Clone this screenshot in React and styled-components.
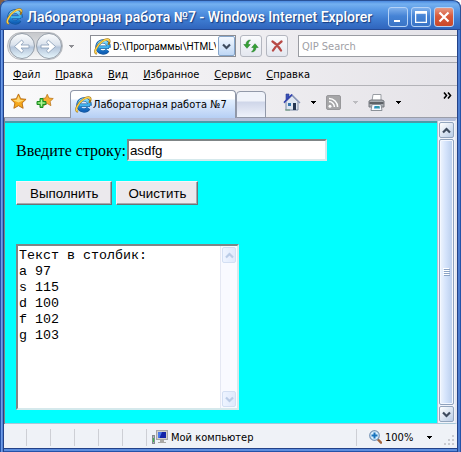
import React, { useState } from "react";
import styled, { createGlobalStyle, css } from "styled-components";

const UI_FONT = '"DejaVu Sans Condensed", "Noto Sans", sans-serif';
const NARROW_FONT = 'Roboto, "Noto Sans", sans-serif';

const GlobalStyle = createGlobalStyle`
  * { box-sizing: border-box; }
  body { margin: 0; background: linear-gradient(to right, #865f42 50%, #fff 50%); }
  button, input, textarea { margin: 0; border-radius: 0; outline: none; }
`;

const Window = styled.div`
  min-height: 100vh;
  display: flex;
  flex-direction: column;
  padding: 0 4px 4px;
  border-radius: 8px 8px 0 0;
  background: linear-gradient(to right, #2452a8 0 1px, #6f9ce6 1px 2px, #5585d6 2px 3px, #234288 3px 4px, transparent 4px calc(100% - 4px), #234288 calc(100% - 4px) calc(100% - 3px), #4c7dd0 calc(100% - 3px) calc(100% - 1px), #2452a8 calc(100% - 1px)),
    linear-gradient(to top, #2452a8 0 1px, #5c8ddd 1px 3px, #234288 3px 4px, #e9e7ec 4px);
  font: 11px ${UI_FONT};
  color: #000;
`;

const TitleBar = styled.header`
  height: 30px;
  margin: 0 -4px;
  padding: 3px 6px 0 5px;
  display: flex;
  align-items: center;
  gap: 4px;
  border: 1px solid #2a5298;
  border-bottom-color: #264a94;
  border-radius: 8px 8px 0 0;
  background: linear-gradient(#4b8ae0 0, #74b0f0 3px, #5a9ae6 9px, #3f7dd2 18px, #3065bd 28px);
`;

const Title = styled.h1`
  flex: 1;
  min-width: 0;
  margin: 0;
  overflow: hidden;
  white-space: nowrap;
  font: 500 14px/20px Roboto, "Open Sans", sans-serif;
  color: #fff;
  text-shadow: 1px 1px 1px #173d80;
`;

const Caption = styled.div`
  display: flex;
  gap: 3px;
`;

const CaptionButton = styled.button`
  width: 20px;
  height: 20px;
  padding: 0;
  display: grid;
  place-items: center;
  border: 1px solid #b5d2f6;
  border-radius: 3px;
  background: ${(p) => (p.$close ? "linear-gradient(#e79a85, #d85a3b 45%, #c9482a)" : "linear-gradient(#7fb0ec, #4583d5 45%, #3a74c6)")};
`;

const Bar = styled.div`
  display: flex;
  align-items: center;
  background: linear-gradient(to right, #fafafb, #e5e3e8);
`;

const NavBar = styled(Bar)`
  height: 33px;
  padding-left: 3px;
  border-bottom: 1px solid #a9a9ae;
`;

const Travel = styled.div`
  width: 56px;
  height: 28px;
  display: flex;
  align-items: center;
  justify-content: space-around;
  border: 1px solid #b9bbc0;
  border-radius: 14px;
  background: linear-gradient(#c6c8cc, #f5f6f7);
`;

const RoundButton = styled.button`
  width: 26px;
  height: 26px;
  padding: 0;
  display: grid;
  place-items: center;
  border: 1px solid #949da8;
  border-radius: 50%;
  background: linear-gradient(#fbfcfd, #dbe3ed 45%, #b4c5da 55%, #e6f5fc);
`;

const Arrow = styled.button`
  width: ${(p) => p.$width || 16}px;
  height: 16px;
  padding: 0;
  display: grid;
  place-items: center;
  border: 0;
  background: transparent;
  color: ${(p) => p.$color || "#000"};
`;

const Address = styled.div`
  flex: 0 1 146px;
  min-width: 0;
  height: 22px;
  margin-left: 11px;
  padding-left: 3px;
  display: flex;
  align-items: center;
  gap: 2px;
  border: 1px solid #8b8d94;
  background: #fff;
`;

const AddressInput = styled.input`
  flex: 1;
  min-width: 0;
  padding: 0;
  border: 0;
  background: transparent;
  font: 10px ${NARROW_FONT};
`;

const GoButton = styled.button`
  width: 17px;
  height: 20px;
  padding: 0;
  display: grid;
  place-items: center;
  border: 1px solid #86a6cb;
  border-radius: 2px;
  background: linear-gradient(#f3f8ff, #bfd7f5);
  color: #3e4b5e;
`;

const ToolButton = styled.button`
  width: 22px;
  height: 22px;
  margin-left: 4px;
  padding: 0;
  display: grid;
  place-items: center;
  border: 1px solid #b3b6bf;
  border-radius: 3px;
  background: linear-gradient(#fafbfd, #e4e7ef);
`;

const Search = styled.input`
  flex: 1;
  min-width: 0;
  height: 22px;
  margin-left: 10px;
  padding: 0 3px;
  border: 1px solid #9a9ca2;
  border-right: 0;
  background: #fff;
  font: 11px ${UI_FONT};
  &::placeholder { color: #a0a0a5; opacity: 1; }
`;

const MenuBar = styled(Bar)`
  height: 23px;
  padding: 2px 0 0 9px;
  gap: 15px;
  border-bottom: 1px solid #b3b3b8;
`;

const MenuItem = styled.button`
  padding: 0;
  border: 0;
  background: transparent;
  color: #000;
  font: 11px/16px ${UI_FONT};
  white-space: nowrap;
`;

const TabBar = styled(Bar)`
  height: 32px;
  padding: 0 5px 0 5px;
  box-shadow: inset 0 -1px #9b9ea9;
`;

const IconButton = styled.button`
  width: ${(p) => p.$width || 18}px;
  height: 20px;
  flex: none;
  padding: 0;
  display: grid;
  place-items: center;
  border: 0;
  background: transparent;
`;

const Favorites = styled.div`
  display: flex;
  gap: 9px;
  margin: 0 16px 2px 0;
`;

const Tab = styled.button`
  align-self: flex-end;
  height: 28px;
  padding: 0 8px 0 4px;
  display: flex;
  align-items: center;
  gap: 1px;
  border: 1px solid #8f97a8;
  border-bottom: 0;
  border-radius: 4px 4px 0 0;
  background: linear-gradient(#fff 0 8px, #e2efff 9px, #b6cff4);
  color: #000;
  font: 11px ${UI_FONT};
  white-space: nowrap;
`;

const NewTab = styled.button`
  align-self: flex-end;
  width: 30px;
  height: 27px;
  padding: 0;
  border: 1px solid #9299a9;
  border-radius: 4px 4px 0 0;
  background: linear-gradient(#f0f3fa 0 9px, #cfd6e9 10px, #eef2fb);
`;

const Commands = styled.div`
  display: flex;
  align-items: center;
  margin-left: 17px;
`;

const Chevron = styled.button`
  align-self: flex-start;
  margin: 1px 0 0 auto;
  padding: 0;
  border: 0;
  background: transparent;
`;

const Viewport = styled.main`
  flex: 1;
  display: flex;
  margin-left: 1px;
  border-top: 3px solid #b5bfd9;
  border-right: 2px solid #e4e6ef;
  border-bottom: 1px solid #a8c8d8;
  box-shadow: -1px 0 #7f8088;
`;

const Page = styled.form`
  flex: 1;
  min-width: 0;
  padding: 15px 11px 13px;
  border-top: 2px solid #4b9ca8;
  background: #0ff;
`;

const Field = styled.div`
  display: flex;
  align-items: center;
  gap: 1px;
  font: 16px/22px "Liberation Serif", serif;
`;

const FieldLabel = styled.label`
  padding-top: 2px;
`;

const inset = css`
  border: 2px solid;
  border-color: #7f8586 #d5e9ec #d5e9ec #7f8586;
  background: #fff;
`;

const TextInput = styled.input`
  width: 200px;
  min-width: 0;
  height: 22px;
  padding: 0 1px;
  ${inset}
  font: 10pt "Liberation Sans", Arial, sans-serif;
`;

const Actions = styled.div`
  display: flex;
  gap: 4px;
  margin: 19px 0 39px;
`;

const PushButton = styled.button`
  height: 24px;
  padding: 0 ${(p) => p.$pad}px;
  border: 1px solid;
  border-color: #f6f5f7 #6c7478 #6c7478 #f6f5f7;
  box-shadow: inset -1px -1px #a9a8ac;
  background: #ebe9ed;
  color: #000;
  font: 10pt "Liberation Sans", Arial, sans-serif;
`;

const OutputBox = styled.div`
  width: 223px;
  max-width: 100%;
  display: flex;
  ${inset}
`;

const Output = styled.textarea`
  flex: 1;
  min-width: 0;
  height: 162px;
  padding: 2px 1px 1px;
  border: 0;
  resize: none;
  overflow: hidden;
  background: transparent;
  color: #000;
  font: 10pt/16px "Liberation Mono", "Courier New", monospace;
`;

const ScrollTrack = styled.div`
  width: ${(p) => (p.$pale ? 17 : 18)}px;
  flex: none;
  display: flex;
  flex-direction: column;
  gap: 1px;
  padding: 1px;
  border-left: 1px solid ${(p) => (p.$pale ? "#e5e8f3" : "#b8c0d4")};
  background: ${(p) => (p.$pale ? "#f9faff" : "#f1f3fa")};
`;

const ScrollButton = styled.button`
  height: 16px;
  flex: none;
  padding: 0;
  display: grid;
  place-items: center;
  border: 1px solid ${(p) => (p.$pale ? "#d3dff3" : "#93a5bd")};
  border-radius: 2px;
  background: ${(p) => (p.$pale ? "linear-gradient(to right, #eef4ff, #dfe9fc)" : "linear-gradient(135deg, #fff, #b9cce6)")};
  color: ${(p) => (p.$pale ? "#b9cbe6" : "#3e4b5e")};
`;

const Thumb = styled.div`
  flex: 1;
  display: grid;
  place-items: center;
  border: 1px solid #8fa2bd;
  border-radius: 2px;
  box-shadow: inset 0 0 0 1px #f4f8ff;
  background: linear-gradient(to right, #eff5fd, #d4e3fb 45%, #b8cdec);
`;

const Spacer = styled.div`
  flex: 1;
`;

const StatusBar = styled.footer`
  height: 24px;
  display: flex;
  align-items: center;
  padding: 2px 0 0 22px;
  background: #eff2f7;
`;

const StatusCell = styled.div`
  width: 24px;
  height: 17px;
  flex: none;
  border-left: 1px solid #cdcfd5;
`;

const StatusZone = styled.div`
  flex: 1;
  height: 17px;
  min-width: 0;
  display: flex;
  align-items: center;
  gap: 3px;
  padding-left: 5px;
  border-left: 1px solid #cdcfd5;
  white-space: nowrap;
`;

const Zoom = styled.div`
  width: 87px;
  height: 17px;
  display: flex;
  align-items: center;
  gap: 3px;
  padding-left: 12px;
  border-left: 1px solid #cdcfd5;
`;

const Grip = styled.svg`
  align-self: flex-end;
  flex: none;
  margin: 0 2px 2px 0;
`;

function ExplorerIcon({ id }) {
  return (
    <svg width="17" height="17" viewBox="0 0 17 17" aria-hidden="true">
      <defs>
        <linearGradient id={id} x1="0" y1="0" x2="0" y2="1">
          <stop offset="0" stopColor="#8de0fb" />
          <stop offset=".5" stopColor="#2a9ce2" />
          <stop offset="1" stopColor="#1261b8" />
        </linearGradient>
      </defs>
      <path d="M14.6 9.5A5.6 5.6 0 1 0 13.6 12.2" fill="none" stroke="#14569d" strokeWidth="4.2" />
      <path d="M5 9.2H15" stroke="#14569d" strokeWidth="3.4" />
      <path d="M14.4 9.5A5.4 5.4 0 1 0 13.4 12.1" fill="none" stroke={`url(#${id})`} strokeWidth="3.2" />
      <path d="M5 9.2H14.5" stroke="#45b5ee" strokeWidth="2.2" />
      <path d="M2.2 15.5C-.8 14 3.1 6.9 8.4 3.2c3.7-2.6 7-2.6 7.1-.2.1 1-.3 2.1-.9 3" fill="none" stroke="#9d741b" strokeWidth="2" strokeLinecap="round" />
      <path d="M2.2 15.3C-.4 13.8 3.5 6.9 8.6 3.3c3.6-2.5 6.6-2.3 6.7-.2" fill="none" stroke="#ffd34a" strokeWidth="1.3" strokeLinecap="round" />
    </svg>
  );
}

const Triangle = () => (
  <svg width="6" height="3" viewBox="0 0 6 3" shapeRendering="crispEdges" aria-hidden="true">
    <path d="M0 0h6L3 3z" fill="currentColor" />
  </svg>
);

const Caret = ({ up }) => (
  <svg width="9" height="7" viewBox="0 0 9 7" aria-hidden="true">
    <path d={up ? "M1 5.5l3.5-3.5L8 5.5" : "M1 1.5l3.5 3.5L8 1.5"} fill="none" stroke="currentColor" strokeWidth="2.2" />
  </svg>
);

const DoubleChevron = () => (
  <svg width="9" height="7" viewBox="0 0 9 7" aria-hidden="true">
    <path d="M1 .5l2.500 3L1 6.500M5 .5l2.500 3L5 6.500" fill="none" stroke="#000" strokeWidth="1.600" />
  </svg>
);

const TravelArrow = ({ forward }) => (
  <svg width="19" height="17" viewBox="0 0 19 17" aria-hidden="true">
    <path
      d={forward ? "M2 7h8L7.5 4.2 9.3 2 16.5 8.5 9.3 15 7.5 12.8 10 10H2z" : "M17 7H9l2.5-2.8L9.7 2 2.5 8.5 9.7 15l1.8-2.2L9 10h8z"}
      fill="#fff"
      stroke="#8fa3bb"
      strokeWidth=".9"
      strokeLinejoin="round"
    />
  </svg>
);

const STAR = "M9 1l2.3 5.1 5.7.6-4.2 3.9 1.1 5.6L9 13.4l-4.9 2.8 1.1-5.6L1 6.7l5.7-.6z";

const StarIcon = () => (
  <svg width="17" height="17" viewBox="0 0 18 18" aria-hidden="true">
    <path d={STAR} fill="#f6a81c" stroke="#b86d13" strokeLinejoin="round" />
    <path d="M9 3l1.6 4.1 4.2.5L9 10 3.3 7.6l4-.5z" fill="#ffd978" />
  </svg>
);

const AddStarIcon = () => (
  <svg width="18" height="17" viewBox="0 0 18 17" aria-hidden="true">
    <path d={STAR} transform="translate(4.5 .5) scale(.75)" fill="#f8b035" stroke="#b87319" strokeLinejoin="round" />
    <path d="M4 5.5h3v3h3v3H7v3H4v-3H1v-3h3z" fill="#5fd052" stroke="#1c8a20" />
    <path d="M5.500 7v6M2.500 10h6" stroke="#b9f39d" strokeWidth="1" />
  </svg>
);

const RefreshIcon = () => (
  <svg width="16" height="16" viewBox="0 0 16 16" aria-hidden="true">
    <path d="M7.5 2C4.700 2 3 3.600 3 6.500H.8L4 10.300l3.300-3.800H5.200C5.300 4.500 6 3.500 7.500 2z" fill="#35a233" stroke="#1a7425" strokeWidth=".5" />
    <path d="M8.500 14c2.800 0 4.500-1.600 4.500-4.500h2.200L12 5.700 8.700 9.500h2.100c-.1 2-.8 3-2.300 4.500z" fill="#35a233" stroke="#1a7425" strokeWidth=".5" />
  </svg>
);

const StopIcon = () => (
  <svg width="12" height="12" viewBox="0 0 12 12" aria-hidden="true">
    <path d="M1.500 1.500C4 3 8 7 10 10.500M10.500 1.500C7 4 4 7 2 10.500" stroke="#b84a47" strokeWidth="2.300" fill="none" strokeLinecap="round" />
  </svg>
);

const HomeIcon = () => (
  <svg width="18" height="18" viewBox="0 0 18 18" aria-hidden="true">
    <path d="M3 8.500l6-6 6 6V17H3z" fill="#dfe6f2" stroke="#7a8aa5" />
    <path d="M3 1h3v4L3 8z" fill="#3c53b8" stroke="#26398f" strokeWidth=".6" />
    <path d="M1 10L9 2l8 8" fill="none" stroke="#8895b8" strokeWidth="1.400" />
    <path d="M1 9.500l8-8" stroke="#2c3bb0" strokeWidth="1.500" />
    <path d="M5 10h3v3H5z" fill="#3675ad" />
    <path d="M10 10h3v7h-3z" fill="#253653" />
    <path d="M2 17h5" stroke="#6c9a79" strokeWidth="1" />
  </svg>
);

const FeedIcon = () => (
  <svg width="15" height="15" viewBox="0 0 15 15" aria-hidden="true">
    <rect x=".5" y=".5" width="14" height="14" rx="1.500" fill="#a6a6a8" stroke="#98989b" />
    <circle cx="4" cy="11.300" r="1.500" fill="#fff" />
    <path d="M3 6.600a5.400 5.400 0 0 1 5.400 5.400M3 3.400A8.600 8.600 0 0 1 11.600 12" fill="none" stroke="#fff" strokeWidth="1.500" />
  </svg>
);

const PrinterIcon = () => (
  <svg width="17" height="17" viewBox="0 0 17 17" aria-hidden="true">
    <path d="M5 .5h8V7H4z" fill="#fff" stroke="#999da3" />
    <path d="M1 7l2-1h11l2 1v6H1z" fill="#a9adb2" stroke="#74797e" />
    <path d="M1.500 8h14v2h-14z" fill="#5d6166" />
    <path d="M4 10.500h9l1 6H3z" fill="#f5fafd" stroke="#8b9198" />
    <path d="M6.500 12h5l.5 2.500H6z" fill="#2791c2" />
    <path d="M9 12.500h2v1H9z" fill="#48aa70" />
  </svg>
);

const ComputerIcon = () => (
  <svg width="16" height="15" viewBox="0 0 16 15" aria-hidden="true">
    <rect x=".5" y="5.500" width="2" height="8" fill="#aeb4b8" stroke="#858b90" />
    <path d="M1.500 8v4" stroke="#3fc04c" />
    <rect x="4.500" y=".5" width="11" height="9" fill="#d2d0cb" stroke="#a5a5a7" />
    <path d="M6 2h8v6H6z" fill="#1223a8" />
    <path d="M6 2h4L7.500 8H6z" fill="#4a78e8" />
    <path d="M8 10h4v2h2v1H6v-1h2z" fill="#aaa9a6" />
  </svg>
);

const MagnifierIcon = () => (
  <svg width="13" height="14" viewBox="0 0 13 14" aria-hidden="true">
    <path d="M8 8.500l4 4.200" stroke="#a0643d" strokeWidth="2.400" strokeLinecap="round" />
    <circle cx="5.500" cy="5.500" r="4.800" fill="#d8efff" stroke="#7895b6" strokeWidth="1.200" />
    <path d="M5.500 2.500v6M2.500 5.500h6" stroke="#1873bd" strokeWidth="2" />
  </svg>
);

const GripIcon = () => (
  <Grip width="12" height="12" viewBox="0 0 12 12" fill="#c9cbd1" aria-hidden="true">
    {[[9, 1], [5, 5], [9, 5], [1, 9], [5, 9], [9, 9]].map(([x, y]) => (
      <rect key={`${x}-${y}`} x={x} y={y} width="2" height="2" />
    ))}
  </Grip>
);

const MENUS = ["Файл", "Правка", "Вид", "Избранное", "Сервис", "Справка"];

const describe = (text) =>
  ["Текст в столбик:", ...[...text].map((ch) => `${ch} ${ch.charCodeAt(0)}`)].join("\n");

export default function App() {
  const [text, setText] = useState("asdfg");
  const [result, setResult] = useState(describe("asdfg"));

  const run = (event) => {
    event.preventDefault();
    setResult(describe(text));
  };
  const clear = () => {
    setText("");
    setResult("");
  };

  return (
    <>
      <GlobalStyle />
      <Window>
        <TitleBar>
          <ExplorerIcon id="title-e" />
          <Title>Лабораторная работа №7 - Windows Internet Explorer</Title>
          <Caption>
            <CaptionButton aria-label="Свернуть">
              <svg width="12" height="12"><path d="M2 9h6v2H2z" fill="#fff" /></svg>
            </CaptionButton>
            <CaptionButton aria-label="Развернуть">
              <svg width="12" height="12"><path d="M.5 2h11M.5 .5h11v11H.5z" fill="none" stroke="#fff" strokeWidth="1.500" /></svg>
            </CaptionButton>
            <CaptionButton $close aria-label="Закрыть">
              <svg width="12" height="12"><path d="M1.500 1.500l9 9M10.500 1.500l-9 9" stroke="#fff" strokeWidth="2.200" /></svg>
            </CaptionButton>
          </Caption>
        </TitleBar>

        <NavBar>
          <Travel>
            <RoundButton aria-label="Назад"><TravelArrow /></RoundButton>
            <RoundButton aria-label="Вперёд"><TravelArrow forward /></RoundButton>
          </Travel>
          <Arrow aria-label="Журнал" $color="#8e8e93"><Triangle /></Arrow>
          <Address>
            <ExplorerIcon id="address-e" />
            <AddressInput aria-label="Адрес" defaultValue="D:\Программы\HTML\" />
            <GoButton aria-label="Показать адреса"><Caret /></GoButton>
          </Address>
          <ToolButton aria-label="Обновить"><RefreshIcon /></ToolButton>
          <ToolButton aria-label="Остановить"><StopIcon /></ToolButton>
          <Search aria-label="Поиск" placeholder="QIP Search" />
        </NavBar>

        <MenuBar as="nav">
          {MENUS.map((name) => (
            <MenuItem key={name}><u>{name[0]}</u>{name.slice(1)}</MenuItem>
          ))}
        </MenuBar>

        <TabBar>
          <Favorites>
            <IconButton aria-label="Избранное"><StarIcon /></IconButton>
            <IconButton aria-label="Добавить в избранное"><AddStarIcon /></IconButton>
          </Favorites>
          <Tab><ExplorerIcon id="tab-e" />Лабораторная работа №7</Tab>
          <NewTab aria-label="Новая вкладка" />
          <Commands>
            <IconButton aria-label="Домой"><HomeIcon /></IconButton>
            <Arrow $width={24} aria-label="Домашние страницы"><Triangle /></Arrow>
            <IconButton aria-label="Каналы"><FeedIcon /></IconButton>
            <Arrow $width={24} $color="#bcbcc0" aria-label="Список каналов"><Triangle /></Arrow>
            <IconButton $width={20} aria-label="Печать"><PrinterIcon /></IconButton>
            <Arrow $width={22} aria-label="Параметры печати"><Triangle /></Arrow>
          </Commands>
          <Chevron aria-label="Ещё"><DoubleChevron /></Chevron>
        </TabBar>

        <Viewport>
          <Page onSubmit={run}>
            <Field>
              <FieldLabel htmlFor="source">Введите строку:</FieldLabel>
              <TextInput id="source" value={text} onChange={(e) => setText(e.target.value)} />
            </Field>
            <Actions>
              <PushButton type="submit" $pad={13}>Выполнить</PushButton>
              <PushButton type="button" $pad={11} onClick={clear}>Очистить</PushButton>
            </Actions>
            <OutputBox>
              <Output aria-label="Результат" readOnly value={result} />
              <ScrollTrack $pale>
                <ScrollButton type="button" $pale aria-label="Вверх"><Caret up /></ScrollButton>
                <Spacer />
                <ScrollButton type="button" $pale aria-label="Вниз"><Caret /></ScrollButton>
              </ScrollTrack>
            </OutputBox>
          </Page>
          <ScrollTrack>
            <ScrollButton aria-label="Прокрутить вверх"><Caret up /></ScrollButton>
            <Thumb>
              <svg width="7" height="8" viewBox="0 0 7 8" shapeRendering="crispEdges">
                <path d="M0 0h6v1H0zM0 2h6v1H0zM0 4h6v1H0zM0 6h6v1H0z" fill="#fff" />
                <path d="M1 1h6v1H1zM1 3h6v1H1zM1 5h6v1H1zM1 7h6v1H1z" fill="#8ba3c5" />
              </svg>
            </Thumb>
            <ScrollButton aria-label="Прокрутить вниз"><Caret /></ScrollButton>
          </ScrollTrack>
        </Viewport>

        <StatusBar>
          {[0, 1, 2, 3, 4].map((i) => <StatusCell key={i} />)}
          <StatusZone><ComputerIcon />Мой компьютер</StatusZone>
          <Zoom>
            <MagnifierIcon />
            100%
            <Arrow $width={26} aria-label="Изменить масштаб"><Triangle /></Arrow>
          </Zoom>
          <GripIcon />
        </StatusBar>
      </Window>
    </>
  );
}
